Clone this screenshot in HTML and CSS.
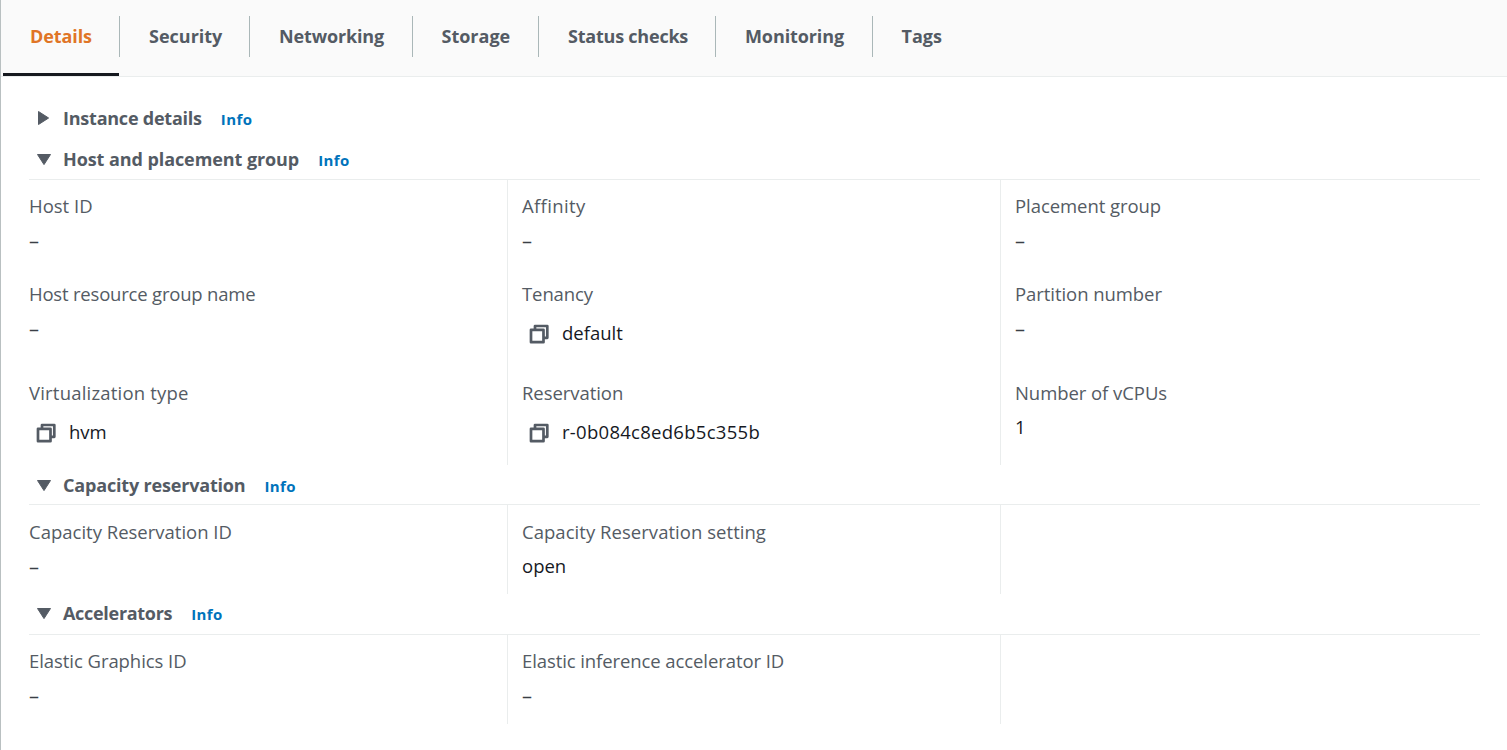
FILE: index.html
```
<!DOCTYPE html>
<html lang="en">
<head>
<meta charset="utf-8">
<title>Instance details</title>
<link rel="stylesheet" href="styles.css">
</head>
<body>
<svg width="0" height="0" class="defs">
  <symbol id="copy" viewBox="0 0 20 20"><path d="M6 5V2h12.3v11.8H15M2 5.8h12.5v12.4H2z" fill="none" stroke="#545b64" stroke-width="2.7" stroke-linejoin="round"/></symbol>
  <symbol id="down" viewBox="0 0 16 14"><path d="M1.5 1.5h13L8 11.6z" fill="#545b64" stroke="#545b64" stroke-linejoin="round"/></symbol>
  <symbol id="right" viewBox="0 0 14 16"><path d="M1.5 1.5v13L11.6 8z" fill="#545b64" stroke="#545b64" stroke-linejoin="round"/></symbol>
</svg>
<main class="panel">
  <nav class="tabs">
    <a class="tab active t1"><span>Details</span></a>
    <a class="tab t2"><span>Security</span></a>
    <a class="tab t3"><span>Networking</span></a>
    <a class="tab t4"><span>Storage</span></a>
    <a class="tab t5"><span>Status checks</span></a>
    <a class="tab t6"><span>Monitoring</span></a>
    <a class="tab t7"><span>Tags</span></a>
  </nav>
  <div class="content">
    <h2 class="head collapsed"><svg class="caret-r"><use href="#right"/></svg><span class="title h1">Instance details</span><a class="info">Info</a></h2>
    <section>
      <h2 class="head host"><svg class="caret"><use href="#down"/></svg><span class="title h2">Host and placement group</span><a class="info">Info</a></h2>
      <div class="grid three">
        <div class="col">
          <div class="field"><span class="label">Host ID</span><span class="value dash">–</span></div>
          <div class="field"><span class="label l2">Host resource group name</span><span class="value dash">–</span></div>
          <div class="field"><span class="label l3">Virtualization type</span><span class="value copy"><svg><use href="#copy"/></svg><span class="v1">hvm</span></span></div>
        </div>
        <div class="col">
          <div class="field"><span class="label l4">Affinity</span><span class="value dash">–</span></div>
          <div class="field"><span class="label l6">Tenancy</span><span class="value copy"><svg><use href="#copy"/></svg><span class="v2">default</span></span></div>
          <div class="field"><span class="label l5">Reservation</span><span class="value copy"><svg><use href="#copy"/></svg><span class="v3">r-0b084c8ed6b5c355b</span></span></div>
        </div>
        <div class="col">
          <div class="field"><span class="label l5">Placement group</span><span class="value dash">–</span></div>
          <div class="field"><span class="label l5">Partition number</span><span class="value dash">–</span></div>
          <div class="field"><span class="label l5">Number of vCPUs</span><span class="value">1</span></div>
        </div>
      </div>
    </section>
    <section>
      <h2 class="head capacity"><svg class="caret"><use href="#down"/></svg><span class="title h3">Capacity reservation</span><a class="info">Info</a></h2>
      <div class="grid one cap">
        <div class="col"><div class="field"><span class="label">Capacity Reservation ID</span><span class="value dash">–</span></div></div>
        <div class="col"><div class="field"><span class="label l7">Capacity Reservation setting</span><span class="value">open</span></div></div>
        <div class="col"></div>
      </div>
    </section>
    <section>
      <h2 class="head accel"><svg class="caret"><use href="#down"/></svg><span class="title h4">Accelerators</span><a class="info">Info</a></h2>
      <div class="grid one">
        <div class="col"><div class="field"><span class="label l5">Elastic Graphics ID</span><span class="value dash">–</span></div></div>
        <div class="col"><div class="field"><span class="label l8">Elastic inference accelerator ID</span><span class="value dash">–</span></div></div>
        <div class="col"></div>
      </div>
    </section>
  </div>
</main>
</body>
</html>
```
FILE: styles.css
```
* { box-sizing: border-box; }
body { margin: 0; background: #fff; color: #16191f; font: 18.5px/26px "Open Sans", "Noto Sans", sans-serif; }
.defs { display: none; }
.panel { height: 750px; border-left: 1px solid #b9c0c1; overflow: hidden; }
.tabs { display: flex; height: 77px; padding-left: 2px; background: #fafafa; border-bottom: 1px solid #eaeded; }
.tab { display: flex; height: 76px; padding-top: 16px; color: #545b64; font-size: 18px; font-weight: 700; white-space: nowrap; }
.tab span { height: 41px; line-height: 41px; padding-left: 29px; flex: 1; border-right: 1px solid #aab7b8; }
.tab.active { color: #e07526; background: linear-gradient(#16191f, #16191f) 0 100% / 116px 3px no-repeat; }
.tab.active span { padding-left: 27px; }
.t1 { width: 117px; letter-spacing: -.1px; }
.t2 { width: 130px; }
.t3 { width: 163px; letter-spacing: -.15px; }
.t4 { width: 126px; }
.tab.t4 span { padding-left: 28.5px; }
.t5 { width: 177px; letter-spacing: -.22px; }
.t6 { width: 157px; letter-spacing: -.1px; }
.tab.t7 span { border: 0; padding-left: 28.5px; }
.content { padding: 20px 27px 0 28px; }
.head { display: flex; align-items: center; margin: 0; padding-left: 7px; color: #545b64; font-size: 18px; font-weight: 700; white-space: nowrap; }
.collapsed { height: 41px; }
.host { height: 41px; }
.capacity { height: 39px; }
.accel { height: 40px; padding-bottom: 2px; }
.h1 { letter-spacing: -.23px; }
.h2 { letter-spacing: -.08px; }
.h3 { letter-spacing: -.18px; }
.h4 { letter-spacing: -.3px; }
.caret { width: 16px; height: 14px; margin: 2px 11px 0 0; }
.caret-r { width: 14px; height: 16px; margin: 0 12px 0 1px; }
.info { margin: 2px 0 0 19px; color: #0073bb; font-size: 15px; letter-spacing: .4px; }
.grid { display: grid; grid-template-columns: 479px 493px 1fr; border-top: 1px solid #eaeded; }
.three { height: 286px; }
.one { height: 90px; }
.col { border-right: 1px solid #eaeded; padding-left: 14px; }
.col:first-child { padding-left: 0; }
.col:last-child { border: 0; }
.three .col { display: grid; grid-template-rows: 88px 99px 98px; }
.field { display: flex; flex-direction: column; gap: 8px; padding-top: 13px; white-space: nowrap; }
.cap .field { padding-top: 14px; }
.label { color: #545b64; }
.l2 { letter-spacing: -.2px; }
.l3 { letter-spacing: .2px; }
.l4 { letter-spacing: .35px; }
.l5 { letter-spacing: -.06px; }
.l6 { letter-spacing: -.1px; }
.l7 { letter-spacing: .04px; }
.l8 { letter-spacing: -.09px; }
.v3 { letter-spacing: .28px; }
.dash { padding-top: 1px; font-size: 20px; color: #3a3f46; }
.copy { display: flex; align-items: center; padding: 5px 0 0 7px; }
.copy svg { width: 20px; height: 20px; margin: 2px 13px 0 0; }
```
